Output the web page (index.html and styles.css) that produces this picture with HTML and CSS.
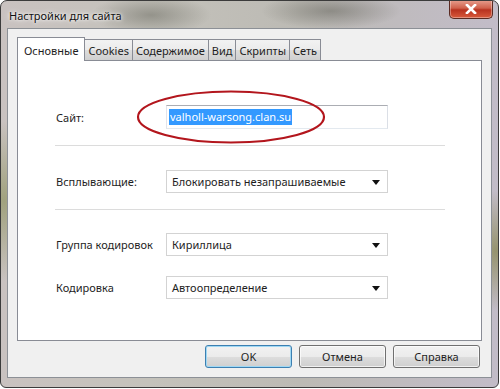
FILE: index.html
```html
<!DOCTYPE html>
<html lang="ru">
<head>
  <meta charset="UTF-8">
  <title>Настройки для сайта</title>
  <link rel="stylesheet" href="styles.css">
</head>
<body>
  <div class="window">
    <div class="titlebar">
      <span class="title">Настройки для сайта</span>
      <button class="close" aria-label="Закрыть">
        <svg width="12" height="10" viewBox="0 0 12 10"><path d="M2 1 L10 9 M10 1 L2 9" stroke="#fff" stroke-width="2.6" stroke-linecap="square"/></svg>
      </button>
    </div>

    <div class="client">
      <div class="tabs">
        <div class="tab active">Основные</div>
        <div class="tab">Cookies</div>
        <div class="tab">Содержимое</div>
        <div class="tab">Вид</div>
        <div class="tab">Скрипты</div>
        <div class="tab">Сеть</div>
      </div>

      <div class="panel">
        <div class="row">
          <label>Сайт:</label>
          <div class="field input"><span class="sel">valholl-warsong.clan.su</span></div>
          <svg class="circle" width="196" height="58" viewBox="0 0 196 58">
            <ellipse cx="98" cy="29" rx="93" ry="25.5" fill="none" stroke="#b3161d" stroke-width="2.2"/>
          </svg>
        </div>
        <div class="sep first"></div>
        <div class="row">
          <label>Всплывающие:</label>
          <div class="field combo">Блокировать незапрашиваемые<span class="arrow"></span></div>
        </div>
        <div class="sep second"></div>
        <div class="row">
          <label>Группа кодировок</label>
          <div class="field combo">Кириллица<span class="arrow"></span></div>
        </div>
        <div class="row">
          <label>Кодировка</label>
          <div class="field combo">Автоопределение<span class="arrow"></span></div>
        </div>
      </div>

      <div class="buttons">
        <button class="btn default">OK</button>
        <button class="btn">Отмена</button>
        <button class="btn">Справка</button>
      </div>
    </div>
  </div>
</body>
</html>
```

FILE: styles.css
```css
* { box-sizing: border-box; }

body {
  margin: 0;
  background: #fff;
  font-family: 'Noto Sans', 'Open Sans', sans-serif;
  font-size: 11px;
  color: #1e1e1e;
}

.window {
  width: 499px;
  height: 388px;
  border: 1px solid #3b3b3b;
  border-radius: 7px 7px 6px 6px;
  padding: 0 6px 9px 6px;
  display: flex;
  flex-direction: column;
  background:
    radial-gradient(ellipse 60px 20px at 150px 14px, rgba(90,90,80,0.45), transparent),
    radial-gradient(ellipse 70px 18px at 330px 10px, rgba(70,70,60,0.4), transparent),
    radial-gradient(ellipse 50px 80px at 3px 200px, rgba(120,130,60,0.5), transparent),
    radial-gradient(ellipse 40px 60px at 495px 250px, rgba(120,120,50,0.6), transparent),
    linear-gradient(to right, #c9c2c0, #c4c2bb 30%, #bcbab4 60%, #c2bcc8);
  overflow: hidden;
}

.titlebar {
  height: 28px;
  display: flex;
  align-items: flex-start;
  justify-content: space-between;
}

.title {
  margin: 7px 0 0 2px;
  color: #111;
  text-shadow: 0 0 6px #fff, 0 0 3px #fff;
}

.close {
  width: 44px;
  height: 19px;
  margin: -1px -1px 0 0;
  padding: 0;
  border: 1px solid #5a2a22;
  border-top: none;
  border-radius: 0 0 5px 5px;
  background: linear-gradient(#e8a090, #d0614c 45%, #b8321f 55%, #d85a3c);
  display: flex;
  align-items: center;
  justify-content: center;
  box-shadow: inset 0 0 0 1px rgba(255,255,255,0.35);
}

.client {
  flex: 1;
  background: #f0f0f0;
  border: 1px solid #8c9096;
  padding: 8px 9px 9px 9px;
  display: flex;
  flex-direction: column;
}

.tabs {
  display: flex;
  align-items: flex-end;
  position: relative;
  z-index: 1;
}

.tab {
  height: 21px;
  padding: 3px 3px 0 3px;
  border: 1px solid #898c95;
  border-bottom: none;
  border-left: none;
  background: linear-gradient(#f2f2f2, #ebebeb 50%, #dddddd 51%, #cfcfcf);
  color: #1e1e1e;
}

.tab.active {
  height: 24px;
  padding: 5px 6px 0 6px;
  border-left: 1px solid #898c95;
  background: #fff;
  margin-bottom: -1px;
}

.panel {
  height: 281px;
  background: #fff;
  border: 1px solid #898c95;
  padding: 44px 0 0 38px;
}

.row {
  display: flex;
  align-items: center;
  height: 24px;
  position: relative;
}

.row + .row { margin-top: 19px; }

.row label {
  width: 110px;
}

.field {
  width: 222px;
  height: 23px;
  background: #fff;
  border: 1px solid #c6c6c6;
  display: flex;
  align-items: center;
  position: relative;
}

.input {
  height: 24px;
  border-color: #abadb3 #dbdfe6 #e3e9ef #e2e3ea;
  padding-left: 2px;
}

.sel {
  background: #3399ff;
  color: #fff;
  line-height: 16px;
  padding: 0 1px;
}

.combo {
  padding-left: 5px;
  border-color: #d3d3d3;
}

.arrow {
  position: absolute;
  right: 7px;
  top: 9px;
  border-left: 4px solid transparent;
  border-right: 4px solid transparent;
  border-top: 5px solid #111;
}

.circle {
  position: absolute;
  left: 77px;
  top: -17px;
}

.sep {
  width: 390px;
  height: 1px;
  background: #dcdcdc;
}

.sep.first { margin: 16px 0 23px -1px; }
.sep.second { margin: 16px 0 22px -1px; }

.buttons {
  display: flex;
  justify-content: flex-end;
  gap: 7px;
  margin-top: 4px;
  padding-right: 2px;
}

.btn {
  width: 87px;
  height: 23px;
  font-family: inherit;
  font-size: 11px;
  color: #1e1e1e;
  border: 1px solid #707070;
  border-radius: 3px;
  background: linear-gradient(#f2f2f2, #ebebeb 50%, #dddddd 51%, #cfcfcf);
  box-shadow: inset 0 0 0 1px rgba(255,255,255,0.7);
}

.btn.default {
  border-color: #3c7fb1;
  box-shadow: inset 0 0 0 1px #9fd8f4;
}
```
